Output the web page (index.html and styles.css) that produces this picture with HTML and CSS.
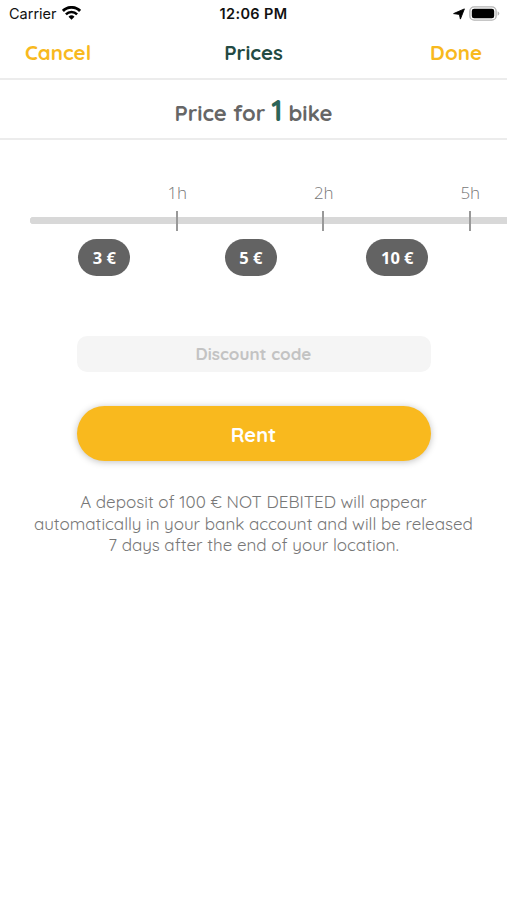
FILE: index.html
```html
<!DOCTYPE html>
<html lang="en">
  <head>
    <meta charset="UTF-8" />
    <meta name="viewport" content="width=device-width, initial-scale=1.0" />
    <title>Prices</title>
    <link rel="stylesheet" href="styles.css">
  </head>

  <body>
    <div class="status-bar">
      <div class="status-left">
        <span class="carrier">Carrier</span>
        <svg class="wifi" width="19" height="14" viewBox="0 0 19 14">
          <path d="M0.9 5 A12.1 12.1 0 0 1 18.1 5" fill="none" stroke="#000" stroke-width="2.9" />
          <path d="M3.9 8.3 A7.8 7.8 0 0 1 15.1 8.3" fill="none" stroke="#000" stroke-width="2.5" />
          <path d="M6.5 10.8 A4.3 4.3 0 0 1 12.5 10.8 L9.5 13.8 Z" />
        </svg>
      </div>
      <span class="clock">12:06 PM</span>
      <div class="status-right">
        <svg class="location" width="12" height="12" viewBox="0 0 12 12">
          <path d="M11.4 0.9 L7.4 11.1 L6.4 6.4 L0.6 5.6 Z" stroke="#000" stroke-width="0.9" stroke-linejoin="round" />
        </svg>
        <svg class="battery" width="31" height="15" viewBox="0 0 31 15">
          <rect x="0.9" y="0.9" width="26.2" height="13.2" rx="4.2" fill="#fff" stroke="#b4b4b4" stroke-width="1.4" />
          <rect x="2.8" y="2.8" width="22.4" height="9.4" rx="2.3" />
          <path d="M28.6 5.3 Q30.3 6 30.3 7.5 Q30.3 9 28.6 9.7 Z" fill="#b4b4b4" />
        </svg>
      </div>
    </div>

    <header class="navbar">
      <button class="nav-button cancel">Cancel</button>
      <h1 class="title">Prices</h1>
      <button class="nav-button done">Done</button>
    </header>

    <h2 class="subtitle"><span>Price for</span><span class="count">1</span><span>bike</span></h2>

    <div class="scale">
      <div class="hours">
        <span>1h</span>
        <span>2h</span>
        <span>5h</span>
      </div>
      <div class="track">
        <div class="segment"></div>
        <div class="segment"></div>
        <div class="segment"></div>
        <div class="segment"></div>
      </div>
      <div class="prices">
        <span class="price">3 €</span>
        <span class="price">5 €</span>
        <span class="price">10 €</span>
      </div>
    </div>

    <form class="rent-form">
      <input type="text" class="discount" placeholder="Discount code" />
      <button type="button" class="rent">Rent</button>
    </form>

    <p class="deposit">
      A deposit of 100 € NOT DEBITED will appear<br />
      automatically in your bank account and will be released<br />
      7 days after the end of your location.
    </p>
  </body>
</html>
```

FILE: styles.css
```css
body {
  font-family: Quicksand, Lato, sans-serif;
  margin: 0;
  padding: 0;
  background-color: #fff;
  color: #666;
}

.status-bar {
  display: grid;
  grid-template-columns: 1fr auto 1fr;
  align-items: center;
  height: 27px;
  padding: 0 7px 0 9px;
  box-sizing: border-box;
  font-family: Inter, sans-serif;
  font-size: 14.5px;
  color: #111;
}
.status-left, .status-right {
  display: flex;
  align-items: center;
}
.status-left {
  gap: 5px;
}
.wifi {
  margin-top: -2px;
}
.status-right {
  justify-content: flex-end;
  gap: 4px;
}
.clock {
  margin-right: 2px;
  font-weight: 600;
  letter-spacing: 0.35px;
}

.navbar {
  display: grid;
  grid-template-columns: 1fr auto 1fr;
  align-items: center;
  height: 53px;
  padding: 0 25px 2px;
  box-sizing: border-box;
  border-bottom: 2px solid #ececec;
}
.nav-button {
  padding: 0;
  border: none;
  background: none;
  font-family: inherit;
  font-size: 20.5px;
  font-weight: 700;
  color: #f8b91e;
  cursor: pointer;
}
.cancel {
  justify-self: start;
}
.done {
  justify-self: end;
}
.title {
  margin: 0;
  font-size: 20.5px;
  font-weight: 700;
  color: #234a43;
}

.subtitle {
  display: flex;
  justify-content: center;
  align-items: baseline;
  gap: 6px;
  height: 60px;
  margin: 0;
  box-sizing: border-box;
  border-bottom: 2px solid #ececec;
  font-size: 22px;
  font-weight: 700;
  line-height: 60px;
}
.count {
  font-size: 29px;
  color: #2c6558;
}

.scale {
  padding: 43px 0 0 30px;
  overflow: hidden;
}
.hours {
  display: grid;
  grid-template-columns: repeat(3, 146.5px);
  margin-left: 74px;
  font-family: "Open Sans", sans-serif;
  font-weight: 300;
  font-size: 17px;
  line-height: 20px;
  text-align: center;
  color: #777;
}
.track {
  display: grid;
  grid-template-columns: 147.5px repeat(3, 146.5px);
  width: 587px;
  height: 20px;
  margin-top: 8px;
}
.segment {
  background: linear-gradient(#d8d8d8, #d8d8d8) 0 6px / 100% 7px no-repeat;
  border-right: 2px solid #999;
}
.segment:first-child {
  background:
    radial-gradient(circle at 3.5px 9.5px, #d8d8d8 3.5px, transparent 4px),
    linear-gradient(#d8d8d8, #d8d8d8) 4px 6px / 100% 7px no-repeat;
}
.prices {
  display: grid;
  grid-template-columns: repeat(3, 146.5px);
  justify-items: center;
  margin: 8px 0 0 1px;
}
.price {
  padding: 1px 14.5px 0;
  border-radius: 19px;
  background-color: #636363;
  font-family: "Noto Sans", sans-serif;
  font-size: 16.5px;
  font-weight: 700;
  line-height: 36px;
  color: #fff;
}

.rent-form {
  display: flex;
  flex-direction: column;
  gap: 34px;
  width: 354px;
  margin: 60px auto 0;
}
.discount {
  height: 36px;
  padding: 0 0 1px;
  box-sizing: border-box;
  border: none;
  border-radius: 10px;
  background-color: #f5f5f5;
  font-family: inherit;
  font-size: 17px;
  font-weight: 700;
  text-align: center;
}
.discount::placeholder {
  color: #c3c3c3;
}
.rent {
  height: 55px;
  padding: 1px 0 0;
  border: none;
  border-radius: 28px;
  background-color: #f9b91e;
  box-shadow: 0 1px 7px rgba(0, 0, 0, 0.25);
  font-family: inherit;
  font-size: 20px;
  font-weight: 700;
  color: #fff;
  cursor: pointer;
}

.deposit {
  margin: 30px 0 0;
  font-size: 17px;
  line-height: 21.5px;
  text-align: center;
  color: #777;
}
```
